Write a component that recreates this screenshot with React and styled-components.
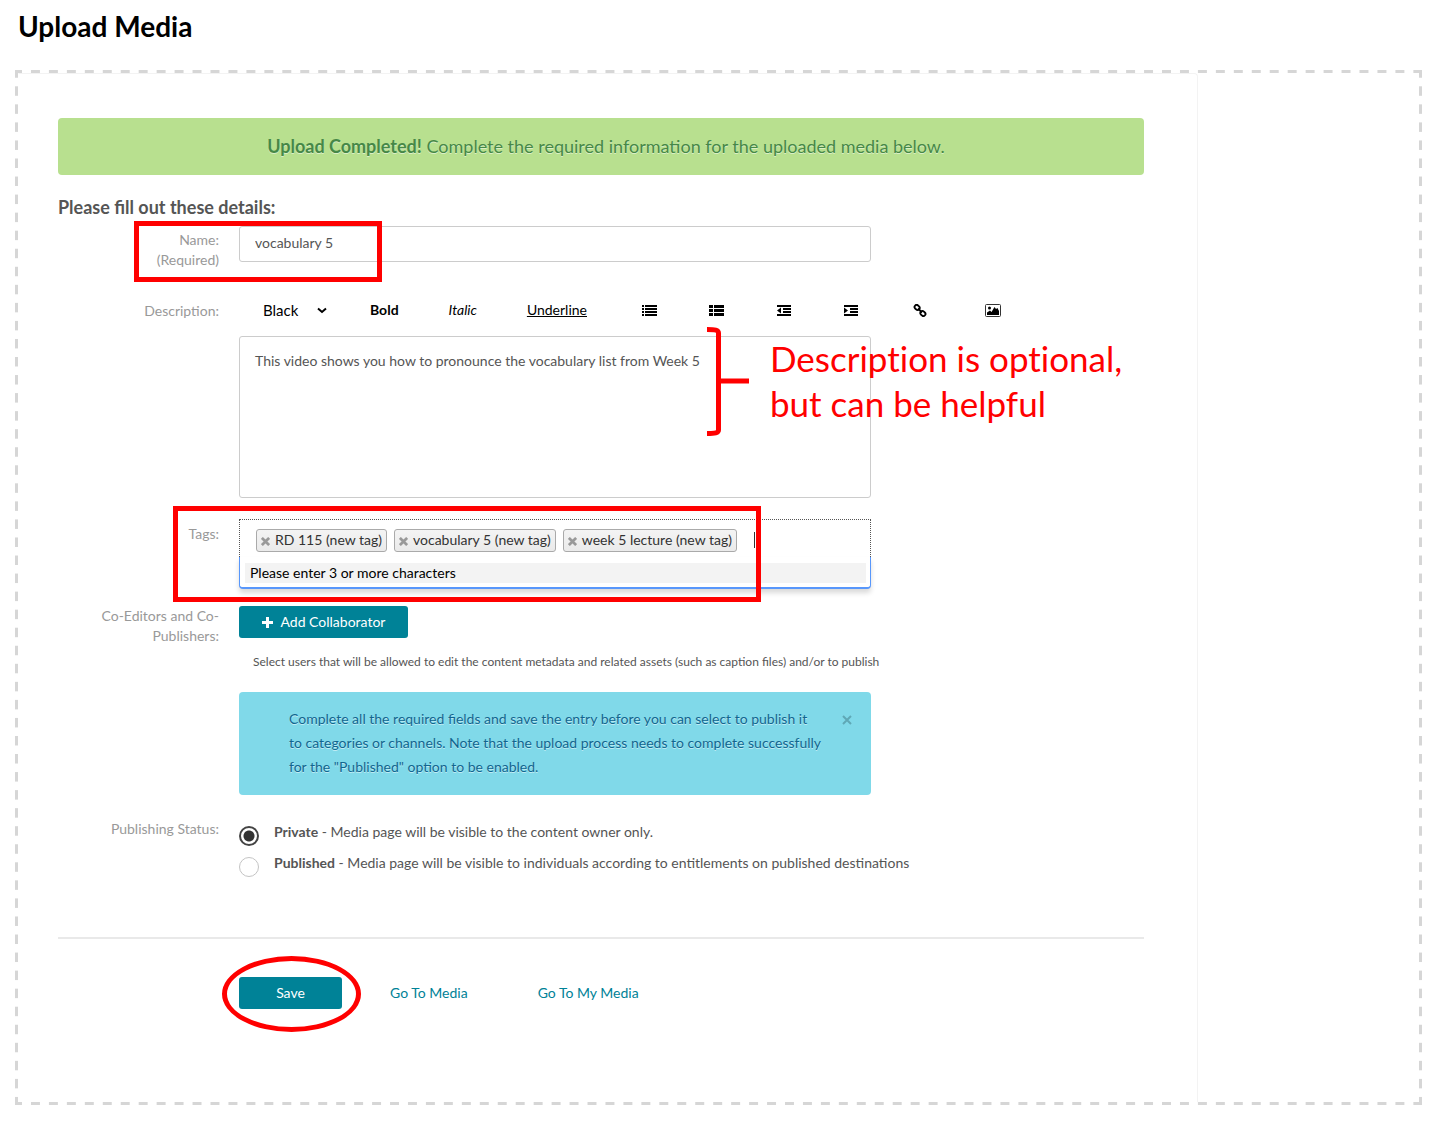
import React from "react";
import styled, { createGlobalStyle, css } from "styled-components";

const GlobalStyle = createGlobalStyle`
  * {
    box-sizing: border-box;
  }
  body {
    margin: 0;
    background: white;
    color: #555;
    font-family: Lato, "Liberation Sans", sans-serif;
    font-size: 14px;
    line-height: 20px;
  }
  button, input, select, textarea {
    font-family: inherit;
    font-size: inherit;
    line-height: inherit;
    margin: 0;
  }
`;

const Page = styled.main`
  padding: 10px 14px 20px 15px;
`;
const Title = styled.h1`
  margin: 0 0 28px 3px;
  color: black;
  font-size: 28px;
  font-weight: bold;
  line-height: 32px;
`;

const dashX = "linear-gradient(to right, #d6d6d6 25%, transparent 25% 75%, #d6d6d6 75%)";
const dashY = "linear-gradient(to bottom, #d6d6d6 25%, transparent 25% 75%, #d6d6d6 75%)";

const DropZone = styled.div`
  border: 3px solid transparent;
  background-image: ${dashX}, ${dashX}, ${dashY}, ${dashY};
  background-origin: padding-box;
  background-clip: border-box;
  background-size: 18px 3px, 18px 3px, 3px 18px, 3px 18px;
  background-repeat: round no-repeat, round no-repeat, no-repeat round,
    no-repeat round;
  background-position: 0 -3px, 0 calc(100% + 3px), -3px 0, calc(100% + 3px) 0;
`;
const Panel = styled.form`
  margin-right: 221px;
  padding: 44px 53px 93px 39px;
  border: 1px solid #f3f3f3;
  border-left-color: transparent;
  border-bottom: none;
  border-top-right-radius: 4px;
`;

const Success = styled.div`
  padding: 18px 20px 19px 30px;
  border-radius: 4px;
  background: #b8e08f;
  color: #468847;
  font-size: 18px;
  text-align: center;
  text-shadow: 0 1px 0 rgba(255, 255, 255, 0.5);
`;
const SectionTitle = styled.h2`
  margin: 22px 0 9px;
  font-size: 18px;
  font-weight: bold;
  line-height: 20px;
`;

const Row = styled.div`
  position: relative;
  display: grid;
  grid-template-columns: 161px minmax(0, 1fr);
  column-gap: 20px;
  margin-bottom: ${(props) => props.$gap || 0}px;
`;
const Label = styled.label`
  padding-top: ${(props) => props.$top || 0}px;
  color: #999;
  text-align: right;
`;
const Field = styled.div`
  width: 100%;
  max-width: 632px;
`;
const boxed = css`
  display: block;
  width: 100%;
  border: 1px solid #ccc;
  border-radius: 3px;
  background: white;
  color: #555;
`;
const TextInput = styled.input`
  ${boxed}
  height: 36px;
  padding: 0 15px 4px;
`;
const TextArea = styled.textarea`
  ${boxed}
  height: 162px;
  padding: 14px 15px;
  resize: none;
`;

const Toolbar = styled.div`
  display: flex;
  align-items: center;
  height: 20px;
  margin-bottom: 16px;
  color: black;
`;
const ColorPicker = styled.div`
  display: flex;
  align-items: center;
  padding: 0 18px 0 24px;
`;
const ColorSelect = styled.select`
  appearance: none;
  width: 64px;
  margin-right: -10px;
  padding: 0;
  border: none;
  background: transparent;
  color: black;
  font-size: 15px;
`;
const Tool = styled.button`
  display: flex;
  align-items: center;
  padding: 0 ${(props) => props.$pad || 25}px;
  border: none;
  background: none;
  color: black;
  font-weight: ${(props) => (props.$bold ? "bold" : "normal")};
  font-style: ${(props) => (props.$italic ? "italic" : "normal")};
  text-decoration: ${(props) => (props.$underline ? "underline" : "none")};
  cursor: pointer;
`;
const IconTools = styled.div`
  display: flex;
  margin-left: 4px;
`;

const TagBox = styled.div`
  display: flex;
  align-items: center;
  gap: 7px;
  height: 38px;
  padding: 3px 15px 0 16px;
  border: 1px dotted #555;
  border-bottom: none;
`;
const Tag = styled.span`
  display: flex;
  align-items: center;
  height: 23px;
  padding: 0 4px;
  border: 1px solid #aaa;
  border-radius: 3px;
  background: linear-gradient(#f4f4f4, #eaeaea);
  color: #333;
  white-space: nowrap;
`;
const TagRemove = styled.button`
  display: flex;
  margin-right: 5px;
  padding: 2px 0 0;
  border: none;
  background: none;
  color: #999;
  cursor: pointer;
`;
const TagInput = styled.input`
  flex: 1;
  min-width: 0;
  height: 16px;
  margin-left: 10px;
  padding: 0;
  border: none;
  border-left: 1px solid #333;
  outline: none;
  background: none;
`;
const Dropdown = styled.div`
  padding: 6px 4px 4px 5px;
  border: 1px solid #5897fb;
  border-top: none;
  border-bottom-width: 2px;
  border-radius: 0 0 4px 4px;
  background: white;
  box-shadow: 0 4px 5px rgba(0, 0, 0, 0.15);
`;
const DropdownHint = styled.div`
  padding: 0 5px;
  background: #f3f3f3;
  color: black;
`;

const PrimaryButton = styled.button`
  display: inline-flex;
  align-items: center;
  justify-content: center;
  gap: 8px;
  width: ${(props) => props.$width}px;
  height: 32px;
  padding: 0;
  border: none;
  border-radius: 3px;
  background: #008297;
  color: white;
  cursor: pointer;
`;
const Help = styled.p`
  margin: 14px 0 20px 14px;
  font-size: 12px;
  white-space: nowrap;
`;
const Info = styled.div`
  display: flex;
  align-items: flex-start;
  gap: 19px;
  padding: 15px 19px 16px 50px;
  border-radius: 4px;
  background: #80d9e9;
  color: #11668f;
  line-height: 24px;
  text-shadow: 0 1px 0 rgba(255, 255, 255, 0.5);

  p {
    flex: 1;
    margin: 0;
  }
`;
const Dismiss = styled.button`
  display: flex;
  padding: 8px 0;
  border: none;
  background: none;
  color: #5fa8b6;
  cursor: pointer;
`;

const Choices = styled.div`
  padding-top: 3px;
`;
const Choice = styled.label`
  display: flex;
  gap: 15px;
  margin-bottom: 7px;
  white-space: nowrap;
`;
const Radio = styled.input`
  appearance: none;
  width: 20px;
  height: 20px;
  margin-top: 4px;
  border: 1px solid #c4c4c4;
  border-radius: 50%;

  &:checked {
    border: 2px solid #444;
    background: radial-gradient(circle, #333 5px, white 6px);
  }
`;
const Divider = styled.hr`
  margin: 53px 0 38px;
  border: none;
  border-top: 2px solid #e9e9e9;
`;
const Actions = styled.div`
  position: relative;
  display: flex;
  align-items: center;
  padding-left: 181px;
`;
const ActionLink = styled.a`
  margin-left: ${(props) => props.$space}px;
  color: #008297;
  text-decoration: none;
`;

const Mark = styled.span`
  position: absolute;
  z-index: 2;
  top: ${(props) => props.$top}px;
  left: ${(props) => props.$left}px;
  width: ${(props) => props.$width}px;
  height: ${(props) => props.$height}px;
  border: 5px solid red;
  border-radius: ${(props) => (props.$oval ? "50%" : 0)};
  pointer-events: none;
`;
const Note = styled.div`
  position: absolute;
  z-index: 2;
  top: 27px;
  left: 649px;
  display: flex;
  gap: 20px;
  color: red;
  font-size: 35px;
  font-variant-ligatures: none;
  line-height: 45px;
  white-space: nowrap;
  pointer-events: none;

  p {
    margin: 9px 0 0;
  }
`;

const Bracket = () => (
  <svg width="43" height="109" viewBox="0 0 43 109" fill="none" stroke="red" strokeWidth="5">
    <path d="M0 2.500C8 2.500 11.500 3 11.500 6V103C11.500 106 8 106.500 0 106.500" />
    <path d="M11.500 54H42" />
  </svg>
);

const icons = {
  list: "M0 1h2v2H0zM3 1h12v2H3zM0 4h2v2H0zM3 4h12v2H3zM0 7h2v2H0zM3 7h12v2H3zM0 10h2v2H0zM3 10h12v2H3z",
  thList: "M0 1h4v3H0zM5 1h10v3H5zM0 5h4v3H0zM5 5h10v3H5zM0 9h4v3H0zM5 9h10v3H5z",
  outdent: "M1 1h14v2H1zM7 4h8v2H7zM7 7h8v2H7zM1 10h14v2H1zM5 3.500v6L1 6.500z",
  indent: "M1 1h14v2H1zM7 4h8v2H7zM7 7h8v2H7zM1 10h14v2H1zM1 3.500v6L5 6.500z",
};

const BarsIcon = ({ name }) => (
  <svg width="15" height="13" viewBox="0 0 15 13" fill="currentColor">
    <path d={icons[name]} />
  </svg>
);

const LinkIcon = () => (
  <svg width="14" height="13" viewBox="0 0 14 13" fill="none" stroke="currentColor" strokeWidth="1.800">
    <rect x="1.300" y="1.300" width="5.500" height="4.200" rx="2.100" transform="rotate(45 4 3.500)" />
    <rect x="7.200" y="7.500" width="5.500" height="4.200" rx="2.100" transform="rotate(45 10 9.500)" />
    <path d="M5 4.500L9 8.500" />
  </svg>
);

const PictureIcon = () => (
  <svg width="16" height="13" viewBox="0 0 16 13" fill="currentColor">
    <rect x="0.500" y="0.500" width="15" height="12" rx="1" fill="none" stroke="#333" />
    <circle cx="4.500" cy="4" r="1.500" />
    <path d="M2 11V8.500L5 6.500L6.500 8L9.500 3L11 5L12.500 4L14 7V11z" />
  </svg>
);

const Cross = ({ size, weight }) => (
  <svg width={size} height={size} viewBox="0 0 10 10" stroke="currentColor" strokeWidth={weight}>
    <path d="M1 1L9 9M9 1L1 9" />
  </svg>
);

const tags = ["RD 115 (new tag)", "vocabulary 5 (new tag)", "week 5 lecture (new tag)"];

const App = () => {
  return (
    <>
      <GlobalStyle />
      <Page>
        <Title>Upload Media</Title>
        <DropZone>
          <Panel onSubmit={(e) => e.preventDefault()}>
            <Success>
              <b>Upload Completed!</b> Complete the required information for the
              uploaded media below.
            </Success>
            <SectionTitle>Please fill out these details:</SectionTitle>

            <Row $gap={30}>
              <Label htmlFor="name" $top={4}>
                Name:
                <br />
                (Required)
              </Label>
              <Field>
                <TextInput id="name" defaultValue="vocabulary 5" />
              </Field>
              <Mark $top={-5} $left={76} $width={248} $height={61} />
            </Row>

            <Row $gap={21}>
              <Label htmlFor="description" $top={1}>
                Description:
              </Label>
              <div>
                <Toolbar>
                  <ColorPicker>
                    <ColorSelect aria-label="Text color">
                      <option>Black</option>
                    </ColorSelect>
                    <svg width="10" height="7" viewBox="0 0 10 7" fill="none" stroke="black" strokeWidth="2">
                      <path d="M1 1.500L5 5L9 1.500" />
                    </svg>
                  </ColorPicker>
                  <Tool type="button" $bold>Bold</Tool>
                  <Tool type="button" $italic>Italic</Tool>
                  <Tool type="button" $underline>Underline</Tool>
                  <IconTools>
                    <Tool type="button" aria-label="List" $pad={26}><BarsIcon name="list" /></Tool>
                    <Tool type="button" aria-label="Numbered list" $pad={26}><BarsIcon name="thList" /></Tool>
                    <Tool type="button" aria-label="Outdent" $pad={26}><BarsIcon name="outdent" /></Tool>
                    <Tool type="button" aria-label="Indent" $pad={26}><BarsIcon name="indent" /></Tool>
                    <Tool type="button" aria-label="Link" $pad={29}><LinkIcon /></Tool>
                    <Tool type="button" aria-label="Image" $pad={29}><PictureIcon /></Tool>
                  </IconTools>
                </Toolbar>
                <Field>
                  <TextArea
                    id="description"
                    defaultValue="This video shows you how to pronounce the vocabulary list from Week 5"
                  />
                </Field>
              </div>
              <Note>
                <Bracket />
                <p>
                  Description is optional,
                  <br />
                  but can be helpful
                </p>
              </Note>
            </Row>

            <Row $gap={17}>
              <Label htmlFor="tags" $top={5}>
                Tags:
              </Label>
              <Field>
                <TagBox>
                  {tags.map((tag) => (
                    <Tag key={tag}>
                      <TagRemove type="button" aria-label={`Remove ${tag}`}>
                        <Cross size={9} weight={3} />
                      </TagRemove>
                      {tag}
                    </Tag>
                  ))}
                  <TagInput id="tags" />
                </TagBox>
                <Dropdown>
                  <DropdownHint>Please enter 3 or more characters</DropdownHint>
                </Dropdown>
              </Field>
              <Mark $top={-13} $left={115} $width={588} $height={96} />
            </Row>

            <Row $gap={24}>
              <Label as="span">Co-Editors and Co-Publishers:</Label>
              <Field>
                <PrimaryButton type="button" $width={169}>
                  <svg width="11" height="11" viewBox="0 0 11 11" stroke="white" strokeWidth="3">
                    <path d="M5.500 0V11M0 5.500H11" />
                  </svg>
                  Add Collaborator
                </PrimaryButton>
                <Help>
                  Select users that will be allowed to edit the content metadata
                  and related assets (such as caption files) and/or to publish
                </Help>
                <Info>
                  <p>
                    Complete all the required fields and save the entry before
                    you can select to publish it to categories or channels. Note
                    that the upload process needs to complete successfully for
                    the "Published" option to be enabled.
                  </p>
                  <Dismiss type="button" aria-label="Close">
                    <Cross size={10} weight={2} />
                  </Dismiss>
                </Info>
              </Field>
            </Row>

            <Row>
              <Label as="span">Publishing Status:</Label>
              <Choices>
                <Choice>
                  <Radio type="radio" name="status" defaultChecked />
                  <span>
                    <b>Private</b> - Media page will be visible to the content
                    owner only.
                  </span>
                </Choice>
                <Choice>
                  <Radio type="radio" name="status" />
                  <span>
                    <b>Published</b> - Media page will be visible to individuals
                    according to entitlements on published destinations
                  </span>
                </Choice>
              </Choices>
            </Row>

            <Divider />
            <Actions>
              <PrimaryButton $width={103}>Save</PrimaryButton>
              <ActionLink href="#media" $space={48}>Go To Media</ActionLink>
              <ActionLink href="#my-media" $space={70}>Go To My Media</ActionLink>
              <Mark $top={-21} $left={164} $width={139} $height={76} $oval />
            </Actions>
          </Panel>
        </DropZone>
      </Page>
    </>
  );
};

export default App;
